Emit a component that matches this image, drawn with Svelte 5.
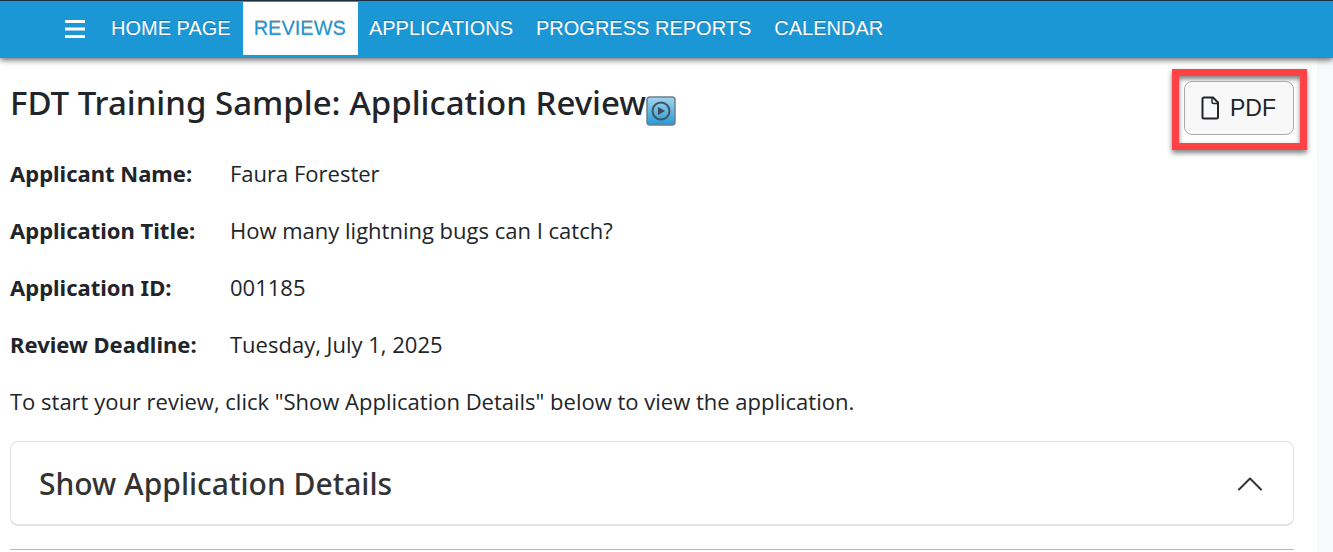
<script>
  const links = ['HOME PAGE', 'REVIEWS', 'APPLICATIONS', 'PROGRESS REPORTS', 'CALENDAR'];
  const current = 'REVIEWS';
  const facts = [
    ['Applicant Name:', 'Faura Forester'],
    ['Application Title:', 'How many lightning bugs can I catch?'],
    ['Application ID:', '001185'],
    ['Review Deadline:', 'Tuesday, July 1, 2025']
  ];
</script>

<div class="page">
  <nav>
    <button class="menu" type="button" aria-label="Menu">
      <svg width="20" height="18" viewBox="0 0 20 18" aria-hidden="true">
        <path d="M0 1.5h20M0 9h20M0 16.5h20" stroke="#fff" stroke-width="3" />
      </svg>
    </button>
    {#each links as link}
      <a href="#top" class:active={link === current}>{link}</a>
    {/each}
  </nav>

  <main>
    <header>
      <div class="heading">
        <h1>FDT Training Sample: Application Review</h1>
        <button class="video" type="button" aria-label="Play video">
          <svg width="30" height="30" viewBox="0 0 30 30" aria-hidden="true">
            <defs>
              <linearGradient id="sky" x1="0" y1="0" x2="0" y2="1">
                <stop offset="0" stop-color="#a5d4ef" />
                <stop offset="1" stop-color="#2499d6" />
              </linearGradient>
            </defs>
            <rect x="1" y="1" width="28" height="28" rx="3" fill="url(#sky)" stroke="#6d7f8a" stroke-width="1.5" />
            <circle cx="15" cy="15" r="8.5" fill="none" stroke="#3f5563" stroke-width="2" />
            <path d="M12 11v8l7-4z" fill="#3f4a52" />
          </svg>
        </button>
      </div>
      <div class="callout">
        <button class="pdf" type="button">
          <svg width="18" height="24" viewBox="0 0 18 24" fill="none" stroke="#212529" stroke-width="2" stroke-linejoin="round" aria-hidden="true">
            <path d="M3 1.5h9l5 5V21a1.5 1.5 0 0 1-1.5 1.5H3A1.5 1.5 0 0 1 1.5 21V3A1.5 1.5 0 0 1 3 1.5z" />
            <path d="M11 1.5v4.500a1.5 1.5 0 0 0 1.500 1.500H17" stroke-width="1.5" />
          </svg>
          PDF
        </button>
      </div>
    </header>

    <dl>
      {#each facts as [name, value]}
        <dt>{name}</dt>
        <dd>{value}</dd>
      {/each}
    </dl>

    <p>To start your review, click "Show Application Details" below to view the application.</p>

    <button class="details" type="button">
      Show Application Details
      <svg width="26" height="14" viewBox="0 0 26 14" fill="none" stroke="#333" stroke-width="2" stroke-linecap="round" stroke-linejoin="round" aria-hidden="true">
        <path d="M2 12.5L13 1.5L24 12.5" />
      </svg>
    </button>
    <hr />
  </main>
</div>

<style>
  :global(body) {
    margin: 0;
    overflow-x: hidden;
    background: #f8f9fa;
  }
  .page {
    min-height: 100vh;
    box-sizing: border-box;
    font-family: 'Open Sans', 'Noto Sans', sans-serif;
    color: #212529;
    background: linear-gradient(#fff, #fff) no-repeat 0 0 / calc(100% - 16px) 100%;
  }
  nav {
    position: relative;
    display: flex;
    align-items: flex-start;
    height: 58px;
    box-sizing: border-box;
    padding: 1px 0 0 65px;
    border-top: 1px solid #1d3040;
    background: #1c97d6;
    box-shadow: 0 2px 6px rgba(0, 0, 0, 0.6);
  }
  nav a {
    padding: 0 12px 0 11px;
    font: 20px/53px 'Liberation Sans', Arial, sans-serif;
    color: #fff;
    text-decoration: none;
    text-shadow: 0 -1px 0 rgba(0, 0, 0, 0.25);
    white-space: nowrap;
  }
  nav a.active {
    background: #fff;
    color: #1c97d6;
  }
  button {
    font-family: inherit;
    color: inherit;
    cursor: pointer;
  }
  .menu,
  .video {
    display: flex;
    align-items: center;
    padding: 0;
    border: 0;
    background: none;
  }
  .menu {
    height: 53px;
    margin-right: 15px;
  }
  main {
    padding: 11px 39px 0 10px;
  }
  header,
  .heading {
    display: flex;
    align-items: flex-start;
  }
  header {
    justify-content: space-between;
    margin-right: -13px;
  }
  .heading {
    padding-top: 11px;
  }
  h1,
  dt,
  .details {
    font-family: 'Noto Sans', 'Open Sans', sans-serif;
    font-weight: 500;
  }
  h1 {
    margin: 0;
    font-size: 33px;
    line-height: 46px;
  }
  .video {
    padding-top: 16px;
  }
  .callout {
    padding: 5px 6px 8px 5px;
    border: 7px solid #ff4245;
    box-shadow: 0 3px 5px rgba(0, 0, 0, 0.5), inset 0 3px 5px rgba(0, 0, 0, 0.5);
  }
  .pdf {
    display: flex;
    align-items: center;
    gap: 11px;
    height: 54px;
    padding: 0 17px 0 16px;
    border: 1px solid #aaa;
    border-radius: 8px;
    background: #f8f8f8;
    font-family: 'Liberation Sans', Arial, sans-serif;
    font-size: 23px;
  }
  dl {
    display: grid;
    grid-template-columns: 220px 1fr;
    row-gap: 23px;
    margin: 6px 0 0;
    font-size: 22px;
    line-height: 34px;
  }
  dt {
    font-weight: 700;
  }
  dd {
    margin: 0;
  }
  p {
    margin: 23px 0;
    font-size: 22px;
    line-height: 34px;
  }
  .details {
    display: flex;
    align-items: center;
    justify-content: space-between;
    width: 100%;
    height: 85px;
    padding: 1px 30px 0 28px;
    border: 1px solid #dee2e6;
    border-bottom-width: 2px;
    border-radius: 8px;
    background: #fff;
    color: #333;
    font-size: 30px;
  }
  hr {
    margin: 23px 0 0;
    border: 0;
    border-top: 1px solid #b8b8b8;
  }
</style>
